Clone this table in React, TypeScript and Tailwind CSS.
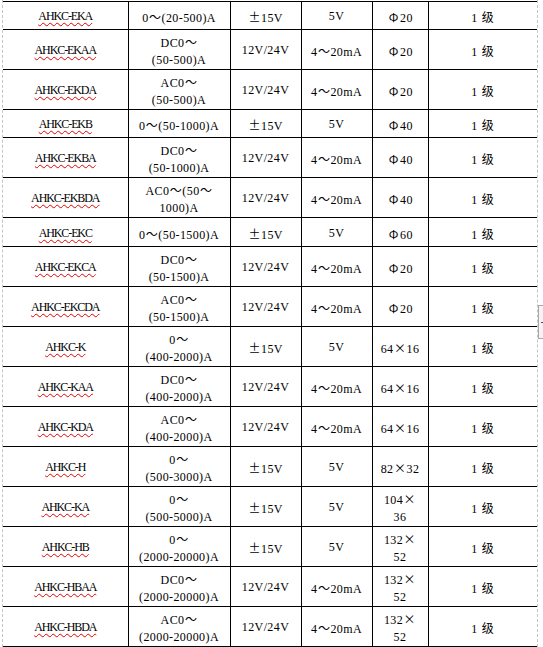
const WIDE = '～±Φ×级';

type Cell = string | string[];
type Row = { h: number; cells: Cell[] };

const r = (h: number, ...cells: Cell[]): Row => ({ h, cells });

const rows: Row[] = [
  r(28, 'AHKC-EKA', '0～(20-500)A', '±15V', '5V', 'Φ20'),
  r(40, 'AHKC-EKAA', ['DC0～', '(50-500)A'], '12V/24V', '4～20mA', 'Φ20'),
  r(40, 'AHKC-EKDA', ['AC0～', '(50-500)A'], '12V/24V', '4～20mA', 'Φ20'),
  r(28, 'AHKC-EKB', '0～(50-1000)A', '±15V', '5V', 'Φ40'),
  r(40, 'AHKC-EKBA', ['DC0～', '(50-1000)A'], '12V/24V', '4～20mA', 'Φ40'),
  r(40, 'AHKC-EKBDA', ['AC0～(50～', '1000)A'], '12V/24V', '4～20mA', 'Φ40'),
  r(29, 'AHKC-EKC', '0～(50-1500)A', '±15V', '5V', 'Φ60'),
  r(40, 'AHKC-EKCA', ['DC0～', '(50-1500)A'], '12V/24V', '4～20mA', 'Φ20'),
  r(40, 'AHKC-EKCDA', ['AC0～', '(50-1500)A'], '12V/24V', '4～20mA', 'Φ20'),
  r(40, 'AHKC-K', ['0～', '(400-2000)A'], '±15V', '5V', '64×16'),
  r(40, 'AHKC-KAA', ['DC0～', '(400-2000)A'], '12V/24V', '4～20mA', '64×16'),
  r(40, 'AHKC-KDA', ['AC0～', '(400-2000)A'], '12V/24V', '4～20mA', '64×16'),
  r(40, 'AHKC-H', ['0～', '(500-3000)A'], '±15V', '5V', '82×32'),
  r(40, 'AHKC-KA', ['0～', '(500-5000)A'], '±15V', '5V', ['104×', '36']),
  r(40, 'AHKC-HB', ['0～', '(2000-20000)A'], '±15V', '5V', ['132×', '52']),
  r(40, 'AHKC-HBAA', ['DC0～', '(2000-20000)A'], '12V/24V', '4～20mA', ['132×', '52']),
  r(40, 'AHKC-HBDA', ['AC0～', '(2000-20000)A'], '12V/24V', '4～20mA', ['132×', '52']),
];

// full-width glyphs get a 13px box, like SimSun draws them
function Txt({ s }: { s: string }) {
  return (
    <>
      {Array.from(s).map((ch, i) =>
        WIDE.includes(ch) ? (
          <span key={i} className="inline-block w-[13px] text-center tracking-normal font-['Noto_Sans_CJK_SC',sans-serif] text-[12px]">
            {ch}
          </span>
        ) : (
          <span key={i}>{ch}</span>
        )
      )}
    </>
  );
}

function Lines({ c }: { c: Cell }) {
  const list = Array.isArray(c) ? c : [c];
  return (
    <>
      {list.map((l, i) => (
        <div key={i} className="h-[19px] leading-[21px] whitespace-nowrap">
          <Txt s={l} />
        </div>
      ))}
    </>
  );
}

export default function App() {
  return (
    <div className="relative w-[543px] h-[647px] overflow-hidden bg-white text-black font-['Liberation_Serif','Noto_Sans_CJK_SC',serif] text-[12px] tracking-[0.4px] leading-[19px]">
      <div className="ml-[2px] w-[536px] h-full pt-px border-x border-dashed border-[#c4c4c4]">
        <table className="w-[534px] table-fixed border-collapse">
          <colgroup>
            <col className="w-[125px]" />
            <col className="w-[102px]" />
            <col className="w-[71px]" />
            <col className="w-[71px]" />
            <col className="w-[56px]" />
            <col className="w-[109px]" />
          </colgroup>
          <tbody>
            {rows.map((row, i) => (
              <tr key={i} style={{ height: row.h }}>
                <td className="border border-l-0 border-black p-0 text-center align-middle">
                  <div className="h-[19px] leading-[21px] whitespace-nowrap">
                    <span className="tracking-[-1.1px] underline decoration-wavy decoration-[#e60000] decoration-1 underline-offset-[2px]">
                      {row.cells[0] as string}
                    </span>
                  </div>
                </td>
                {row.cells.slice(1).map((c, j) => (
                  <td key={j} className="border border-black p-0 text-center align-middle">
                    <Lines c={c} />
                  </td>
                ))}
                <td className="border border-r-0 border-black p-0 text-center align-middle">
                  <Lines c="1 级" />
                </td>
              </tr>
            ))}
          </tbody>
        </table>
      </div>

      {/* little ruler marker on the right margin */}
      <div className="absolute left-[538px] top-[305px] w-[6px] h-[34px] bg-[#f4f4f4] border border-r-0 border-[#a8a8a8]">
        <div className="mt-[16px] ml-[2px] w-[4px] h-px bg-[#555]" />
      </div>
    </div>
  );
}
